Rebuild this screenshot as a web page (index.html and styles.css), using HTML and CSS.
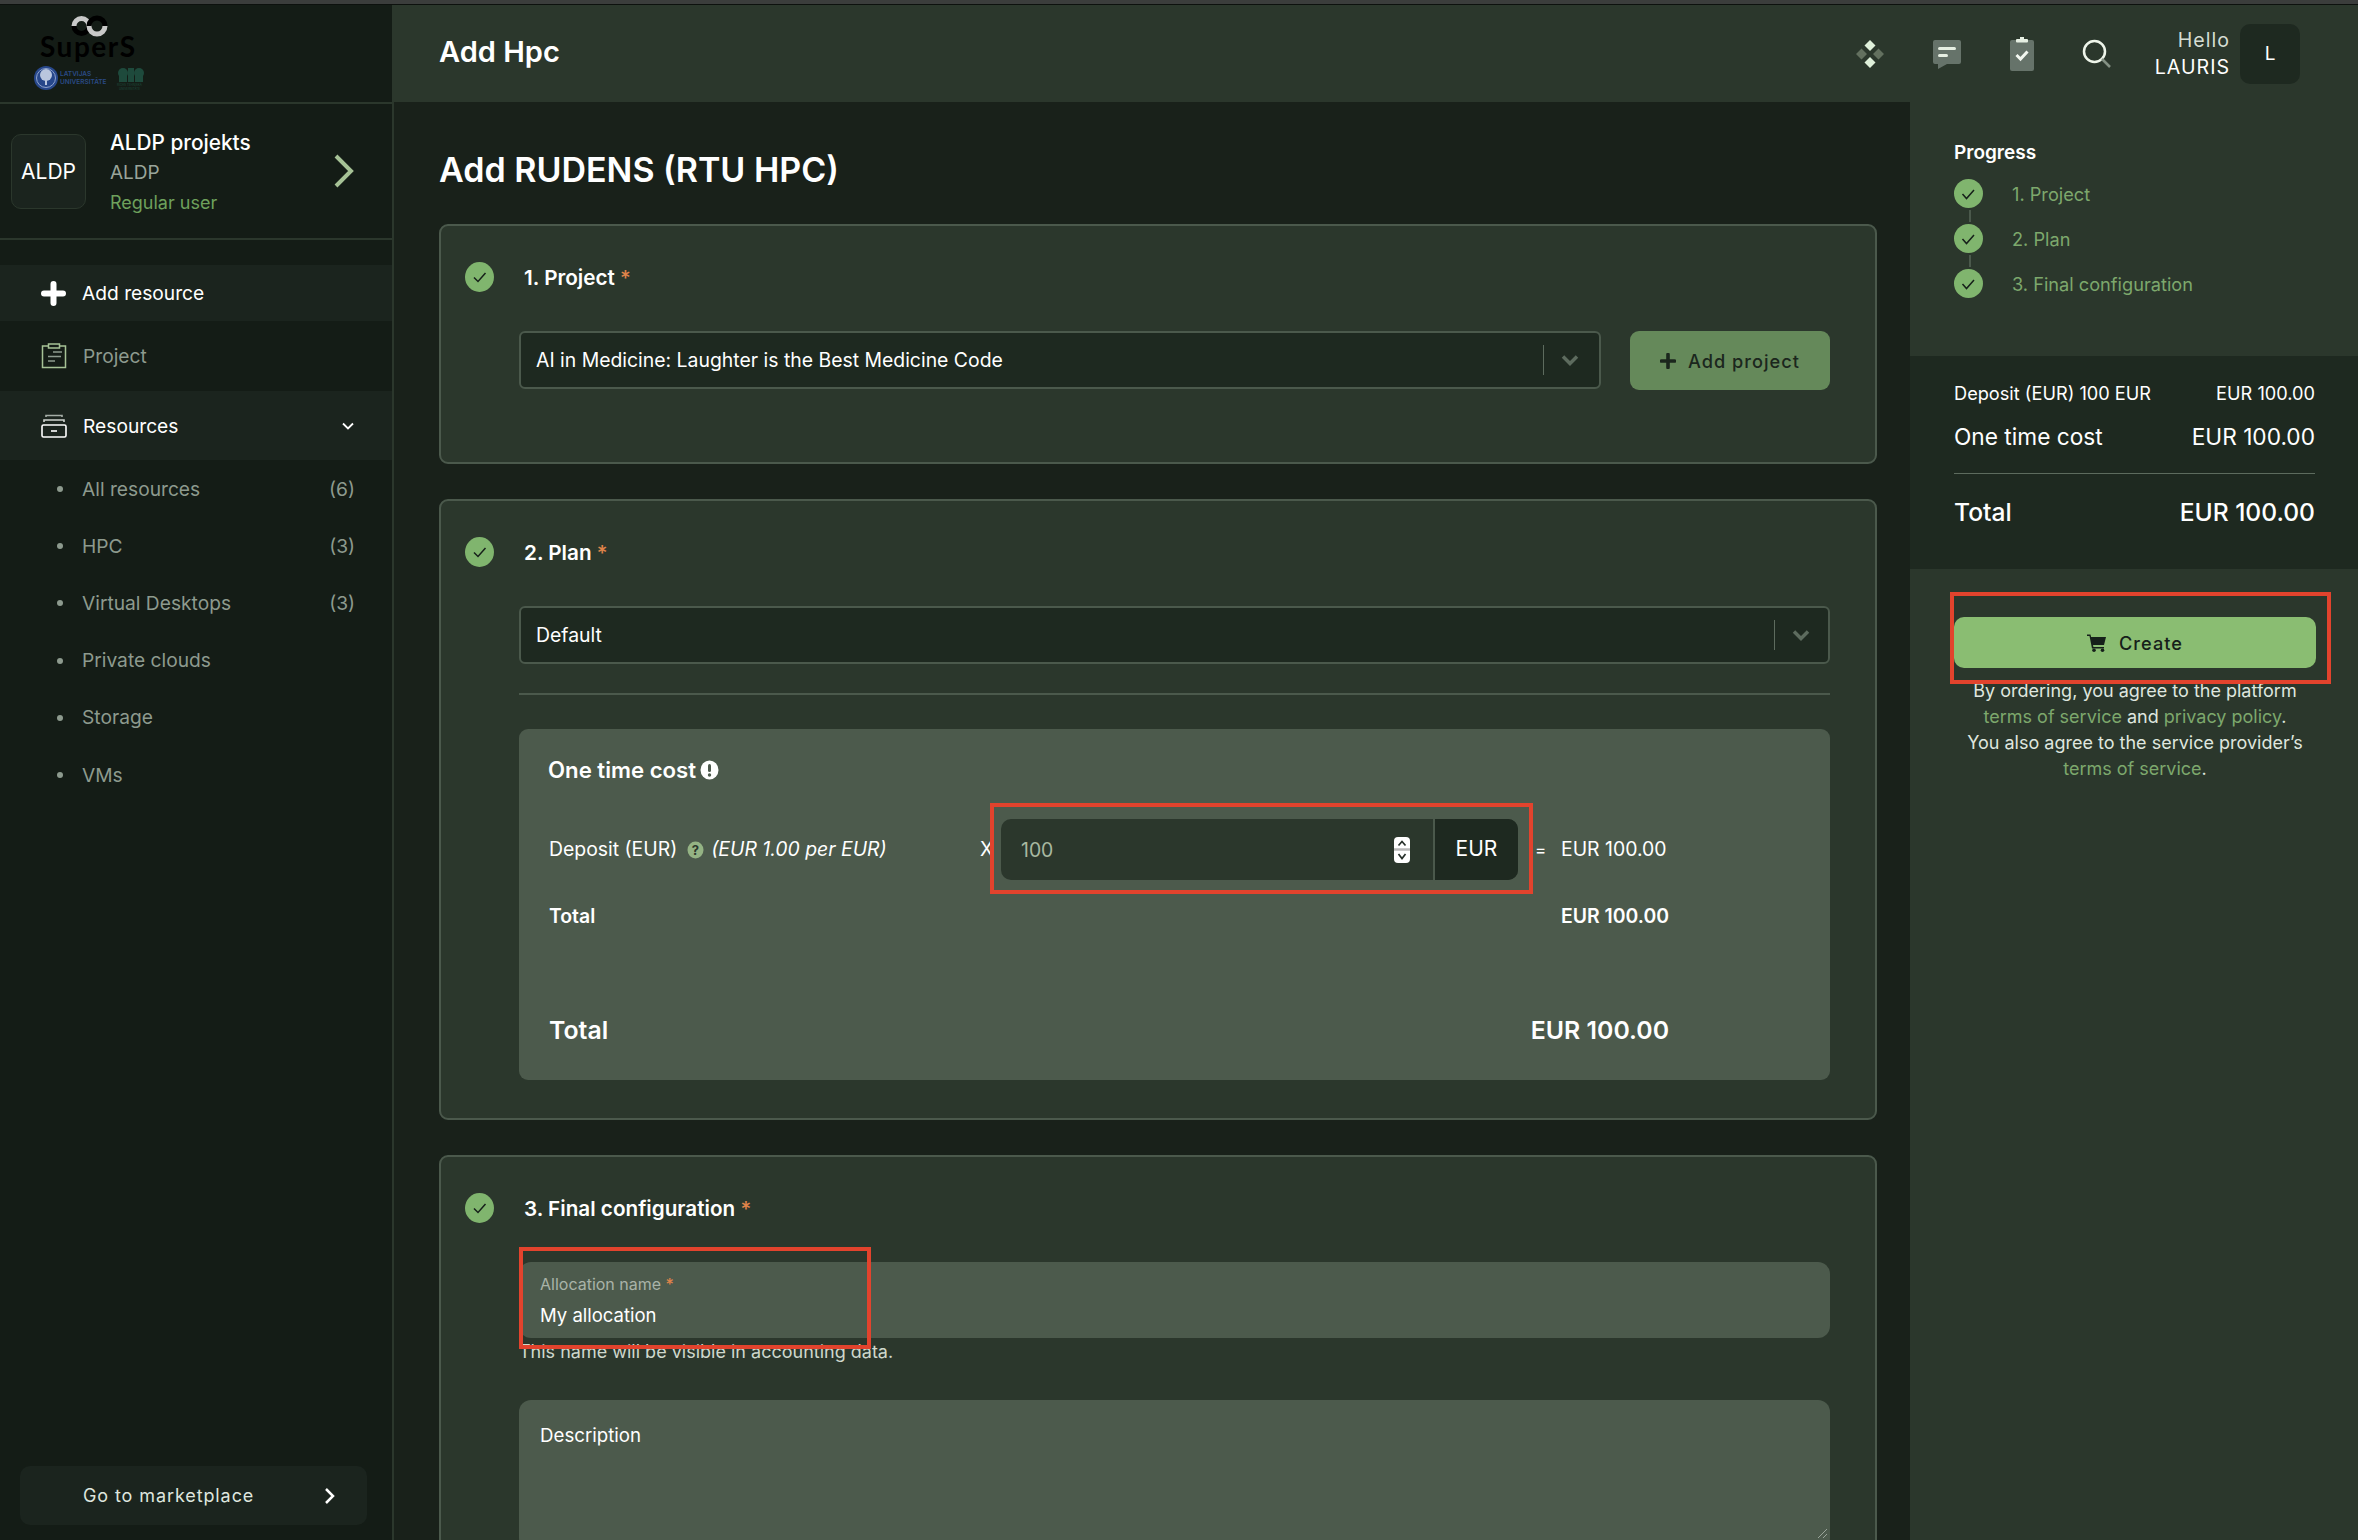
FILE: index.html
```html
<!DOCTYPE html>
<html lang="en">
<head>
    <meta charset="UTF-8">
    <meta name="viewport" content="width=device-width, initial-scale=1.0">
    <title>Add Hpc</title>
    <link rel="stylesheet" href="styles.css">
</head>
<body>
    <div class="topstrip"></div>
    <div class="app">
        <div class="sidebar">
            <div class="logo">
                <svg width="392" height="97" viewBox="0 5 392 97">
                    <g fill="none" stroke-width="5">
                        <path d="M74 26a7.500 7.500 0 0 0 15 0" stroke="#000"/>
                        <path d="M74 26a7.500 7.500 0 0 1 15 0" stroke="#c9c9c9"/>
                        <path d="M89 26a8 8 0 0 1 16 0" stroke="#000"/>
                        <path d="M89 26a8 8 0 0 0 16 0" stroke="#c9c9c9"/>
                    </g>
                    <text class="logo-name" x="40" y="57">SuperS</text>
                    <circle cx="46" cy="78" r="12" fill="#27478a"/>
                    <circle cx="46" cy="78" r="9.500" fill="none" stroke="#8ea2cc" stroke-width="1"/>
                    <circle cx="46" cy="75" r="6" fill="#b9c6de"/>
                    <rect x="45" y="78" width="2" height="7" fill="#b9c6de"/>
                    <text class="logo-lu" x="60" y="76">LATVIJAS</text>
                    <text class="logo-lu" x="60" y="84">UNIVERSITĀTE</text>
                    <circle cx="123" cy="73" r="5" fill="#1e4a3c"/>
                    <circle cx="139" cy="73" r="5" fill="#1e4a3c"/>
                    <rect x="119" y="75" width="8" height="7" fill="#1e4a3c"/>
                    <rect x="135" y="75" width="8" height="7" fill="#1e4a3c"/>
                    <rect x="128" y="68" width="6" height="14" fill="#1e4a3c"/>
                    <text class="logo-rtu" x="117" y="86">RĪGAS TEHNISKĀ</text>
                    <text class="logo-rtu" x="119" y="90">UNIVERSITĀTE</text>
                </svg>
            </div>
            <div class="project-box">
                <div class="project-avatar">ALDP</div>
                <div class="project-info">
                    <div class="project-name">ALDP projekts</div>
                    <div class="project-org">ALDP</div>
                    <div class="project-role">Regular user</div>
                </div>
                <svg class="project-arrow" width="24" height="36" viewBox="0 0 24 36"><path d="M4 3l15 15L4 33" fill="none" stroke="#a6c296" stroke-width="4"/></svg>
            </div>
            <div class="nav">
                <div class="nav-item nav-add">
                    <svg width="25" height="25" viewBox="0 0 25 25"><path d="M12.500 3v19M3 12.500h19" stroke="#fff" stroke-width="6" stroke-linecap="round"/></svg>
                    <span>Add resource</span>
                </div>
                <div class="nav-item nav-project">
                    <svg width="26" height="26" viewBox="0 0 26 26" fill="none" stroke="#a6c296" stroke-width="1.500"><path d="M7 3H1.500v21.500h23V3H19"/><rect x="7.500" y="1" width="11" height="4"/><path d="M12 9h9M7 13.500h13M7 18h7" stroke="#8d9a8e"/></svg>
                    <span>Project</span>
                </div>
                <div class="nav-item nav-open">
                    <svg width="26" height="26" viewBox="0 0 26 26" fill="none" stroke="#fff" stroke-width="1.600"><path d="M5 4V2.500h16V4" stroke="#a5ada6"/><path d="M3 9V7h20v2" stroke="#cfd4cf"/><rect x="1" y="12" width="24" height="12" rx="1.500"/><path d="M10 18h6"/></svg>
                    <span>Resources</span>
                    <svg class="nav-caret" width="14" height="10" viewBox="0 0 14 10"><path d="M2 2.500l5 5 5-5" fill="none" stroke="#fff" stroke-width="1.800"/></svg>
                </div>
                <div class="sub-item"><span>All resources</span><span>(6)</span></div>
                <div class="sub-item"><span>HPC</span><span>(3)</span></div>
                <div class="sub-item"><span>Virtual Desktops</span><span>(3)</span></div>
                <div class="sub-item"><span>Private clouds</span></div>
                <div class="sub-item"><span>Storage</span></div>
                <div class="sub-item"><span>VMs</span></div>
            </div>
            <div class="market">
                <span>Go to marketplace</span>
                <svg width="12" height="18" viewBox="0 0 12 18"><path d="M2 2l7 7-7 7" fill="none" stroke="#fff" stroke-width="2.500"/></svg>
            </div>
        </div>

        <div class="content">
            <div class="header">
                <div class="page-name">Add Hpc</div>
                <div class="header-icons">
                    <svg width="28" height="30" viewBox="0 0 28 30">
                        <path d="M14 1l5.500 5.500L14 12 8.500 6.500z" fill="#dff0da"/>
                        <path d="M14 18l5.500 5.500L14 29l-5.500-5.500z" fill="#dff0da"/>
                        <path d="M5.500 9.500L11 15l-5.500 5.500L0 15zM22.500 9.500L28 15l-5.500 5.500L17 15z" fill="#63705f"/>
                    </svg>
                    <svg width="30" height="30" viewBox="0 0 30 30">
                        <path d="M3 1h24a2 2 0 0 1 2 2v20a2 2 0 0 1-2 2H15l-9 5v-5H3a2 2 0 0 1-2-2V3a2 2 0 0 1 2-2z" fill="#66736a"/>
                        <rect x="6" y="8" width="18" height="3" rx="1.500" fill="#e6efe3"/>
                        <rect x="6" y="15" width="10" height="3" rx="1.500" fill="#e6efe3"/>
                    </svg>
                    <svg width="24" height="34" viewBox="0 0 24 34">
                        <path d="M2 3h20a2 2 0 0 1 2 2v27a2 2 0 0 1-2 2H2a2 2 0 0 1-2-2V5a2 2 0 0 1 2-2z" fill="#66736a"/>
                        <rect x="6" y="2" width="12" height="3.500" rx="1" fill="#e6efe3"/>
                        <rect x="10" y="0" width="4" height="3" fill="#e6efe3"/>
                        <path d="M6.500 18l4 4 7-7.500" fill="none" stroke="#f2f7f0" stroke-width="3"/>
                    </svg>
                    <svg width="30" height="30" viewBox="0 0 30 30" fill="none">
                        <circle cx="12.500" cy="12.500" r="10.500" stroke="#eef5ea" stroke-width="2.500"/>
                        <path d="M20 20l8 8" stroke="#849184" stroke-width="2.500"/>
                    </svg>
                </div>
                <div class="hello">
                    <div>Hello</div>
                    <div>LAURIS</div>
                </div>
                <div class="user-avatar">L</div>
            </div>

            <div class="columns">
                <div class="main">
                    <h1>Add RUDENS (RTU HPC)</h1>

                    <div class="card">
                        <div class="card-head">
                            <svg class="check" width="29" height="30" viewBox="0 0 29 30"><ellipse cx="14.500" cy="15" rx="14.500" ry="15" fill="#80b56e"/><path d="M9 15.500l4 4 7.500-8.500" fill="none" stroke="#16201a" stroke-width="1.500"/></svg>
                            <span>1. Project <i>*</i></span>
                        </div>
                        <div class="card-body project-row">
                            <div class="select">
                                <span>AI in Medicine: Laughter is the Best Medicine Code</span>
                                <div class="select-sep"></div>
                                <svg width="18" height="12" viewBox="0 0 18 12"><path d="M2 2.500l7 7 7-7" fill="none" stroke="#5d6b5e" stroke-width="3.500"/></svg>
                            </div>
                            <div class="add-btn">
                                <svg width="16" height="16" viewBox="0 0 16 16"><path d="M8 1.500v13M1.500 8h13" stroke="#1b261d" stroke-width="3.600" stroke-linecap="round"/></svg>
                                <span>Add project</span>
                            </div>
                        </div>
                    </div>

                    <div class="card">
                        <div class="card-head">
                            <svg class="check" width="29" height="30" viewBox="0 0 29 30"><ellipse cx="14.500" cy="15" rx="14.500" ry="15" fill="#80b56e"/><path d="M9 15.500l4 4 7.500-8.500" fill="none" stroke="#16201a" stroke-width="1.500"/></svg>
                            <span>2. Plan <i>*</i></span>
                        </div>
                        <div class="card-body">
                            <div class="select select-plan">
                                <span>Default</span>
                                <div class="select-sep"></div>
                                <svg width="18" height="12" viewBox="0 0 18 12"><path d="M2 2.500l7 7 7-7" fill="none" stroke="#5d6b5e" stroke-width="3.500"/></svg>
                            </div>
                            <div class="plan-line"></div>
                            <div class="cost-box">
                                <div class="cost-title">One time cost
                                    <svg width="19" height="20" viewBox="0 0 19 20"><ellipse cx="9.500" cy="10" rx="9" ry="9.500" fill="#fff"/><rect x="8" y="4" width="3" height="8" rx="1.500" fill="#4c5a4c"/><circle cx="9.500" cy="15" r="1.700" fill="#4c5a4c"/></svg>
                                </div>
                                <div class="cost-row">
                                    <div class="cost-label">Deposit (EUR)
                                        <svg width="17" height="18" viewBox="0 0 17 18"><ellipse cx="8.500" cy="9" rx="8" ry="8.500" fill="#94b384"/><text class="help-mark" x="8.500" y="13.500">?</text></svg>
                                        <em>(EUR 1.00 per EUR)</em>
                                    </div>
                                    <div class="cost-x">X</div>
                                    <div class="amount">
                                        <span class="amount-value">100</span>
                                        <svg class="spinner" width="18" height="26" viewBox="0 0 18 26"><rect x="1" width="16" height="26" rx="4" fill="#fff"/><path d="M1 12.500h16" stroke="#b8b8b8" stroke-width="2.500"/><path d="M5.500 8.500L9 4.500l3.500 4M5.500 17L9 21.500l3.500-4.500" fill="none" stroke="#26302a" stroke-width="1.700"/></svg>
                                        <span class="amount-unit">EUR</span>
                                        <div class="mark mark-amount"></div>
                                    </div>
                                    <div class="cost-eq">=</div>
                                    <div class="cost-value">EUR 100.00</div>
                                </div>
                                <div class="cost-row cost-sub">
                                    <div>Total</div>
                                    <div></div>
                                    <div></div>
                                    <div></div>
                                    <div>EUR 100.00</div>
                                </div>
                                <div class="cost-total">
                                    <span>Total</span>
                                    <span>EUR 100.00</span>
                                </div>
                            </div>
                        </div>
                    </div>

                    <div class="card">
                        <div class="card-head">
                            <svg class="check" width="29" height="30" viewBox="0 0 29 30"><ellipse cx="14.500" cy="15" rx="14.500" ry="15" fill="#80b56e"/><path d="M9 15.500l4 4 7.500-8.500" fill="none" stroke="#16201a" stroke-width="1.500"/></svg>
                            <span>3. Final configuration <i>*</i></span>
                        </div>
                        <div class="card-body">
                            <div class="field">
                                <div class="field-label">Allocation name <i>*</i></div>
                                <div class="field-value">My allocation</div>
                                <div class="mark mark-field"></div>
                            </div>
                            <div class="field-help">This name will be visible in accounting data.</div>
                            <div class="textarea">
                                <span>Description</span>
                                <svg class="grip" width="12" height="12" viewBox="0 0 12 12"><path d="M11 2L2 11M11 7l-4 4" stroke="#9aa59a" stroke-width="1"/></svg>
                            </div>
                        </div>
                    </div>
                </div>

                <div class="aside">
                    <div class="progress">
                        <div class="progress-title">Progress</div>
                        <div class="step">
                            <svg width="29" height="29" viewBox="0 0 29 29"><circle cx="14.500" cy="14.500" r="14.500" fill="#80b56e"/><path d="M8.500 15l4 4.500 7.500-8.500" fill="none" stroke="#16201a" stroke-width="1.500"/></svg>
                            <span>1. Project</span>
                        </div>
                        <div class="step step-next">
                            <svg width="29" height="29" viewBox="0 0 29 29"><circle cx="14.500" cy="14.500" r="14.500" fill="#80b56e"/><path d="M8.500 15l4 4.500 7.500-8.500" fill="none" stroke="#16201a" stroke-width="1.500"/></svg>
                            <span>2. Plan</span>
                        </div>
                        <div class="step step-next">
                            <svg width="29" height="29" viewBox="0 0 29 29"><circle cx="14.500" cy="14.500" r="14.500" fill="#80b56e"/><path d="M8.500 15l4 4.500 7.500-8.500" fill="none" stroke="#16201a" stroke-width="1.500"/></svg>
                            <span>3. Final configuration</span>
                        </div>
                    </div>
                    <div class="summary">
                        <div class="sum-row sum-small"><span>Deposit (EUR) 100 EUR</span><span>EUR 100.00</span></div>
                        <div class="sum-row sum-mid"><span>One time cost</span><span>EUR 100.00</span></div>
                        <div class="sum-row sum-total"><span>Total</span><span>EUR 100.00</span></div>
                    </div>
                    <div class="order">
                        <div class="create-btn">
                            <svg width="19" height="18" viewBox="0 0 19 18"><path d="M0 0.500h3.500l.6 2.500H19l-2 8H6l.4 2H17v1.500H5L2.500 2H0z" fill="#16201a"/><circle cx="7" cy="16.200" r="1.800" fill="#16201a"/><circle cx="15.500" cy="16.200" r="1.800" fill="#16201a"/></svg>
                            <span>Create</span>
                            <div class="mark mark-create"></div>
                        </div>
                        <p class="terms">By ordering, you agree to the platform<br><a href="#">terms of service</a> and <a href="#">privacy policy</a>.<br>You also agree to the service provider’s<br><a href="#">terms of service</a>.</p>
                    </div>
                </div>
            </div>
        </div>
    </div>
</body>
</html>
```

FILE: styles.css
```css
body {
    font-family: Inter, "Liberation Sans", sans-serif;
    background-color: #19211a;
    color: #fff;
    margin: 0;
    height: 100vh;
    overflow: hidden;
    font-size: 19.4px;
}

.topstrip {
    height: 4px;
    background-color: #3b3d3c;
    border-bottom: 1px solid #0d110e;
}

.app {
    display: flex;
    height: 1535px;
}

/* sidebar */

.sidebar {
    width: 392px;
    flex: none;
    border-right: 2px solid #2b372c;
    background-color: #141c16;
    display: flex;
    flex-direction: column;
}

.logo {
    height: 97px;
    border-bottom: 2px solid #2b372c;
}

.logo svg {
    display: block;
}

.logo-name {
    font-family: Lato, sans-serif;
    font-size: 28px;
    font-weight: 700;
    letter-spacing: 1.5px;
    fill: #000;
}

.logo-lu {
    font-size: 6.5px;
    font-weight: 600;
    fill: #2a4a85;
}

.logo-rtu {
    font-size: 3px;
    fill: #1e4a3c;
}

.project-box {
    height: 134px;
    border-bottom: 2px solid #2b372c;
    display: flex;
    align-items: center;
    padding-left: 11px;
}

.project-avatar {
    width: 75px;
    height: 75px;
    box-sizing: border-box;
    border: 1px solid #2b372c;
    border-radius: 10px;
    background-color: #1b241e;
    display: flex;
    align-items: center;
    justify-content: center;
    font-size: 21px;
}

.project-info {
    margin: 4px 0 0 24px;
    width: 222px;
}

.project-name {
    font-size: 20.8px;
    font-weight: 500;
    line-height: 30px;
}

.project-org {
    color: #9aa59b;
    line-height: 29px;
    font-size: 19px;
}

.project-role {
    color: #6ea15c;
    line-height: 31px;
    font-size: 18px;
}

.nav {
    padding-top: 25px;
    flex: 1;
    font-size: 19.2px;
}

.nav-item {
    display: flex;
    align-items: center;
    padding: 0 37px 0 41px;
}

.nav-item span {
    margin-left: 16px;
    flex: 1;
}

.nav-add {
    height: 56px;
    background-color: #1b241e;
}

.nav-project {
    height: 70px;
    color: #8d9a8e;
}

.nav-open {
    background-color: #1b241e;
    height: 69px;
}

.sub-item {
    height: 57.2px;
    display: flex;
    align-items: center;
    justify-content: space-between;
    padding: 0 37px 0 82px;
    color: #8d9a8e;
    position: relative;
}

.sub-item::before {
    content: "";
    position: absolute;
    left: 57px;
    top: 26px;
    width: 6px;
    height: 6px;
    border-radius: 50%;
    background-color: #8d9a8e;
}

.market {
    margin: 0 25px 15px 20px;
    height: 59px;
    border-radius: 10px;
    background-color: #1b241e;
    display: flex;
    align-items: center;
    justify-content: space-between;
    padding: 0 31px 0 63px;
    font-size: 18px;
    letter-spacing: 0.9px;
    color: #dfe6df;
}

/* header */

.content {
    flex: 1;
    min-width: 0;
    display: flex;
    flex-direction: column;
}

.header {
    height: 97px;
    flex: none;
    background-color: #2b372c;
    display: flex;
    align-items: center;
    padding: 0 58px 0 45px;
}

.page-name {
    font-size: 29px;
    font-weight: 600;
    flex: 1;
    padding-bottom: 5px;
}

.header-icons {
    display: flex;
    align-items: center;
    gap: 48px;
    margin: 1px 43px 0 0;
}

.hello {
    text-align: right;
    font-size: 19.6px;
    line-height: 27px;
    letter-spacing: 1px;
    margin-right: 10px;
}

.hello div:first-child {
    color: #d5ddd3;
}

.user-avatar {
    width: 60px;
    height: 60px;
    border-radius: 10px;
    background-color: #1e2920;
    display: flex;
    align-items: center;
    justify-content: center;
    font-size: 19px;
}

.columns {
    flex: 1;
    min-height: 0;
    display: flex;
}

/* main */

.main {
    width: 1516px;
    box-sizing: border-box;
    flex: none;
    padding: 0 33px 0 45px;
    overflow: hidden;
}

h1 {
    font-size: 34px;
    font-weight: 600;
    line-height: 44px;
    margin: 46px 0 32px;
}

.card {
    background-color: #2b372c;
    border: 2px solid #4b594c;
    border-radius: 9px;
    margin-bottom: 35px;
    padding: 36px 45px 38px 24px;
}

.card-head {
    display: flex;
    align-items: center;
    height: 30px;
    gap: 30px;
    font-size: 20.7px;
    font-weight: 600;
}

.card-head i, .field-label i {
    font-style: normal;
    font-weight: 500;
    color: #e0844a;
}

.card-body {
    margin: 39px 0 0 54px;
}

.project-row {
    display: flex;
    gap: 29px;
    margin-bottom: 34px;
}

.select {
    flex: 1;
    height: 58px;
    box-sizing: border-box;
    border: 2px solid #4b594c;
    border-radius: 6px;
    background-color: #1e2920;
    display: flex;
    align-items: center;
    padding: 0 20px 0 15px;
}

.select span {
    flex: 1;
}

.select-plan {
    padding-right: 18px;
}

.select-sep {
    width: 1px;
    height: 30px;
    background-color: #5d6b5e;
    margin-right: 17px;
}

.add-btn {
    width: 200px;
    height: 59px;
    border-radius: 9px;
    background-color: #65895a;
    color: #1b261d;
    display: flex;
    align-items: center;
    justify-content: center;
    gap: 12px;
    font-weight: 500;
    letter-spacing: 1px;
    font-size: 18.2px;
}

.plan-line {
    height: 2px;
    background-color: #4b594c;
    margin: 29px 0 34px;
}

.cost-box {
    background-color: #4c5a4c;
    border-radius: 9px;
    padding: 26px 30px 33px;
    box-sizing: border-box;
}

.cost-title {
    font-size: 22.2px;
    font-weight: 600;
    line-height: 30px;
    display: flex;
    align-items: center;
    gap: 4px;
    margin: 0 0 34px -1px;
}

.cost-row {
    display: grid;
    grid-template-columns: 427px 25px 517px 43px 1fr;
    align-items: center;
}

.cost-label {
    display: flex;
    align-items: center;
    gap: 10px;
    padding-bottom: 2px;
}

.cost-label svg {
    margin-top: 2px;
}

.cost-label em {
    margin-left: -3px;
}

.cost-x {
    padding: 0 0 2px 4px;
}

.cost-value {
    padding-bottom: 2px;
}

.help-mark {
    font-size: 13px;
    font-weight: 700;
    fill: #2b372c;
    text-anchor: middle;
}

.cost-eq {
    font-size: 17px;
    padding-left: 17px;
}

.cost-sub {
    margin-top: 24px;
    font-weight: 600;
    line-height: 24px;
}

.amount {
    position: relative;
    height: 61px;
    border-radius: 10px;
    background-color: #2b372c;
    display: flex;
    align-items: center;
}

.amount-value {
    flex: 1;
    padding-left: 20px;
    color: #a7b8a0;
}

.spinner {
    margin-right: 22px;
}

.amount-unit {
    width: 85px;
    height: 61px;
    box-sizing: border-box;
    border-left: 2px solid #4b594c;
    border-radius: 0 10px 10px 0;
    background-color: #1e2920;
    display: flex;
    align-items: center;
    justify-content: center;
    font-size: 21px;
    padding-bottom: 3px;
}

.cost-total {
    margin-top: 85px;
    display: flex;
    justify-content: space-between;
    font-size: 24.8px;
    font-weight: 600;
    line-height: 34px;
    padding-right: 131px;
}

/* red rectangles drawn over the screenshot */
.mark {
    position: absolute;
    border: 4px solid #e2432d;
    box-sizing: border-box;
    pointer-events: none;
}

.mark-amount {
    left: -11px;
    top: -16px;
    width: 543px;
    height: 91px;
}

.mark-field {
    left: 0;
    top: -15px;
    width: 352px;
    height: 102px;
}

.mark-create {
    left: -4px;
    top: -25px;
    width: 381px;
    height: 92px;
}

.field {
    position: relative;
    height: 76px;
    border-radius: 12px;
    background-color: #4c5a4c;
    padding: 11px 21px 0;
    box-sizing: border-box;
}

.field-label {
    font-size: 16px;
    line-height: 22px;
    color: #a9b3a8;
}

.field-value {
    font-size: 18.5px;
    line-height: 30px;
    margin-top: 5px;
}

.field-help {
    font-size: 18px;
    line-height: 24px;
    margin: 2px 0 36px;
    color: #cfd8cc;
}

.textarea {
    position: relative;
    height: 150px;
    border-radius: 12px;
    background-color: #4c5a4c;
    padding: 24px 21px;
    box-sizing: border-box;
    font-size: 18.7px;
}

.grip {
    position: absolute;
    right: 2px;
    top: 127px;
}

/* right column */

.aside {
    flex: 1;
    background-color: #2b372c;
    display: flex;
    flex-direction: column;
}

.progress {
    height: 254px;
    box-sizing: border-box;
    padding: 38px 43px 0 44px;
}

.progress-title {
    font-weight: 600;
    line-height: 26px;
    font-size: 19px;
    margin-bottom: 13px;
}

.step {
    display: flex;
    align-items: center;
    gap: 29px;
    height: 29px;
    color: #7da86c;
    font-size: 18.2px;
    position: relative;
}

.step-next {
    margin-top: 16px;
}

.step-next::before {
    content: "";
    position: absolute;
    left: 15px;
    top: -14px;
    height: 12px;
    width: 0;
    border-left: 2px dashed #4b594c;
}

.summary {
    height: 213px;
    box-sizing: border-box;
    background-color: #1e2920;
    padding: 25px 43px 0 44px;
}

.sum-row {
    display: flex;
    justify-content: space-between;
}

.sum-small {
    font-size: 18.2px;
    line-height: 24px;
}

.sum-mid {
    font-size: 22.7px;
    line-height: 30px;
    margin-top: 17px;
    padding-bottom: 21px;
    border-bottom: 1px solid #5d6b5e;
}

.sum-total {
    font-size: 24.6px;
    font-weight: 500;
    line-height: 34px;
    margin-top: 21px;
}

.order {
    padding: 48px 42px 0 44px;
}

.create-btn {
    position: relative;
    height: 51px;
    border-radius: 10px;
    background-color: #8abd72;
    color: #16201a;
    display: flex;
    align-items: center;
    justify-content: center;
    gap: 13px;
    font-weight: 500;
    font-size: 18.2px;
    letter-spacing: 1px;
}

.terms {
    margin: 10px -10px 0;
    font-size: 18px;
    line-height: 26px;
    text-align: center;
    color: #dfe6df;
}

.terms a {
    color: #7da86c;
    text-decoration: none;
}
```
